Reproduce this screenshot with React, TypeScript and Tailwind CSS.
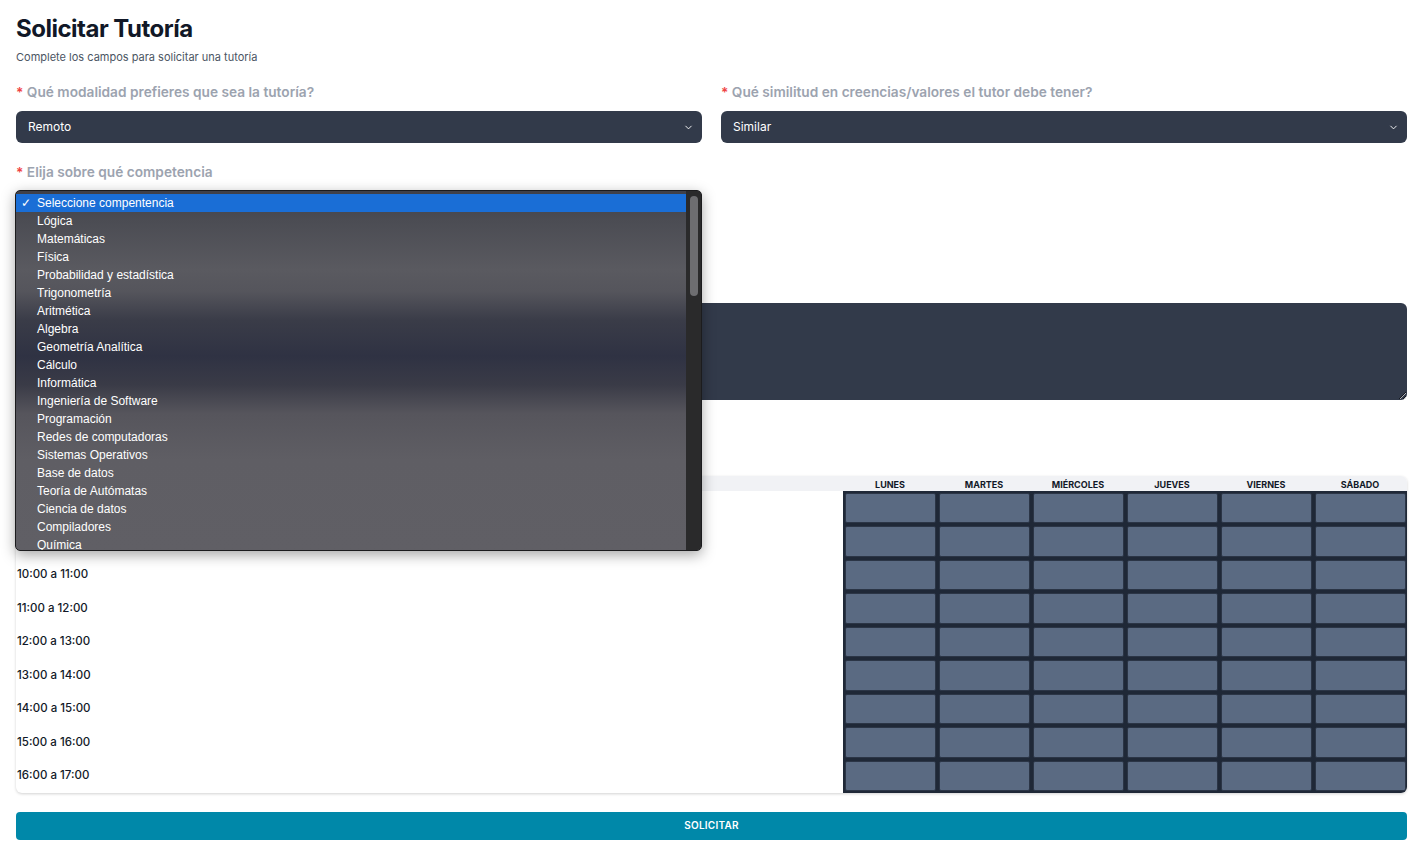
import React from "react";
import { ChevronDown } from "lucide-react";

const options = [
  "Seleccione compentencia",
  "Lógica",
  "Matemáticas",
  "Física",
  "Probabilidad y estadística",
  "Trigonometría",
  "Aritmética",
  "Algebra",
  "Geometría Analítica",
  "Cálculo",
  "Informática",
  "Ingeniería de Software",
  "Programación",
  "Redes de computadoras",
  "Sistemas Operativos",
  "Base de datos",
  "Teoría de Autómatas",
  "Ciencia de datos",
  "Compiladores",
  "Química",
];

const days = ["LUNES", "MARTES", "MIÉRCOLES", "JUEVES", "VIERNES", "SÁBADO"];
const hours = [
  "08:00 a 09:00",
  "09:00 a 10:00",
  "10:00 a 11:00",
  "11:00 a 12:00",
  "12:00 a 13:00",
  "13:00 a 14:00",
  "14:00 a 15:00",
  "15:00 a 16:00",
  "16:00 a 17:00",
];

function Label({ children }: { children: React.ReactNode }) {
  return (
    <div className="h-5 text-[13.7px] leading-5 font-semibold text-[#9ca3af]">
      <span className="text-[#ef4444]">*</span> {children}
    </div>
  );
}

function FakeSelect({ value }: { value: string }) {
  return (
    <div className="mt-[9px] h-8 rounded-md bg-[#323a4a] flex items-center justify-between pl-3 pr-2 text-white text-[12px]">
      <span>{value}</span>
      <ChevronDown size={11} strokeWidth={2} className="text-white" />
    </div>
  );
}

export default function App() {
  return (
    <div
      className="min-h-[852px] bg-white pl-4 pr-[19px] pt-[13px]"
      style={{ fontFamily: "Inter, 'Noto Sans', sans-serif" }}
    >
      <h1 className="text-[24px] leading-8 font-bold text-[#111827] tracking-[-0.5px]">
        Solicitar Tutoría
      </h1>
      <p className="mt-[4px] text-[11px] leading-4 text-[#4b5563]">
        Complete los campos para solicitar una tutoría
      </p>

      <div className="mt-[17px] grid grid-cols-2 gap-x-[19px]">
        <div>
          <Label>Qué modalidad prefieres que sea la tutoría?</Label>
          <FakeSelect value="Remoto" />
        </div>
        <div>
          <Label>Qué similitud en creencias/valores el tutor debe tener?</Label>
          <FakeSelect value="Similar" />
        </div>

        <div className="mt-[19px] relative">
          <Label>Elija sobre qué competencia</Label>
          <div className="relative">
            <FakeSelect value="" />
            <div
              className="absolute z-10 left-[-1px] top-[-1px] w-[687px] h-[361px] rounded-[5px] border border-[#1c1c1e] shadow-[0_4px_14px_rgba(0,0,0,0.35)] bg-[linear-gradient(180deg,#3f4048_0%,#4b4c53_8%,#5a5a60_22%,#55555c_28%,#3a3c48_36%,#2f3243_46%,#3a3b47_54%,#56555c_62%,#5f5e64_75%,#605f65_100%)] flex overflow-hidden"
              style={{ fontFamily: "'Liberation Sans', Arial, sans-serif" }}
            >
              <div className="flex-1 pt-[3px]">
                {options.map((o, i) => (
                  <div
                    key={o}
                    className={
                      "h-[18px] flex items-center text-[12px] text-white " +
                      (i === 0 ? "bg-[#1a6ed6]" : "")
                    }
                  >
                    <span className="w-[21px] pl-[5px] text-[12px]">{i === 0 ? "✓" : ""}</span>
                    {o}
                  </div>
                ))}
              </div>
              <div className="w-[15px] bg-[#2a2a2b] pt-[5px] flex justify-center">
                <div className="w-[8px] h-[100px] rounded-full bg-[#6d6d70]" />
              </div>
            </div>
          </div>
        </div>
        <div />
      </div>

      <div className="mt-[51px]">
        <div className="h-5" />
        <textarea className="mt-[9px] block w-full h-[97px] rounded-md bg-[#323a4a] text-white text-[12px] p-3 outline-none" />
      </div>

      <div className="mt-[30px] h-5" />

      <div className="mt-[26px] rounded-md shadow-[0_1px_3px_rgba(0,0,0,0.18)] overflow-hidden">
        <div className="flex h-[15px] bg-[#f1f2f5]">
          <div className="flex-1" />
          <div className="w-[564px] grid grid-cols-6">
            {days.map((d) => (
              <div key={d} className="text-center text-[9px] font-bold text-[#111827] leading-[15px] pt-[1px]">
                {d}
              </div>
            ))}
          </div>
        </div>
        {hours.map((h, i) => (
          <div key={h} className="flex h-[33.5px]">
            <div className="flex-1 flex items-center pl-[1px] text-[11.5px] font-medium text-[#111827]">
              {i < 2 ? "" : h}
            </div>
            <div className="w-[564px] grid grid-cols-6 bg-[#1f2837]">
              {days.map((d) => (
                <div
                  key={d}
                  className="m-[1.5px] border border-[#2b3546] rounded-[2px] bg-[#5a6a82]"
                />
              ))}
            </div>
          </div>
        ))}
      </div>

      <button className="mt-[19px] w-full h-7 rounded bg-[#0088a9] text-white text-[10px] font-semibold tracking-wide">
        SOLICITAR
      </button>
    </div>
  );
}
